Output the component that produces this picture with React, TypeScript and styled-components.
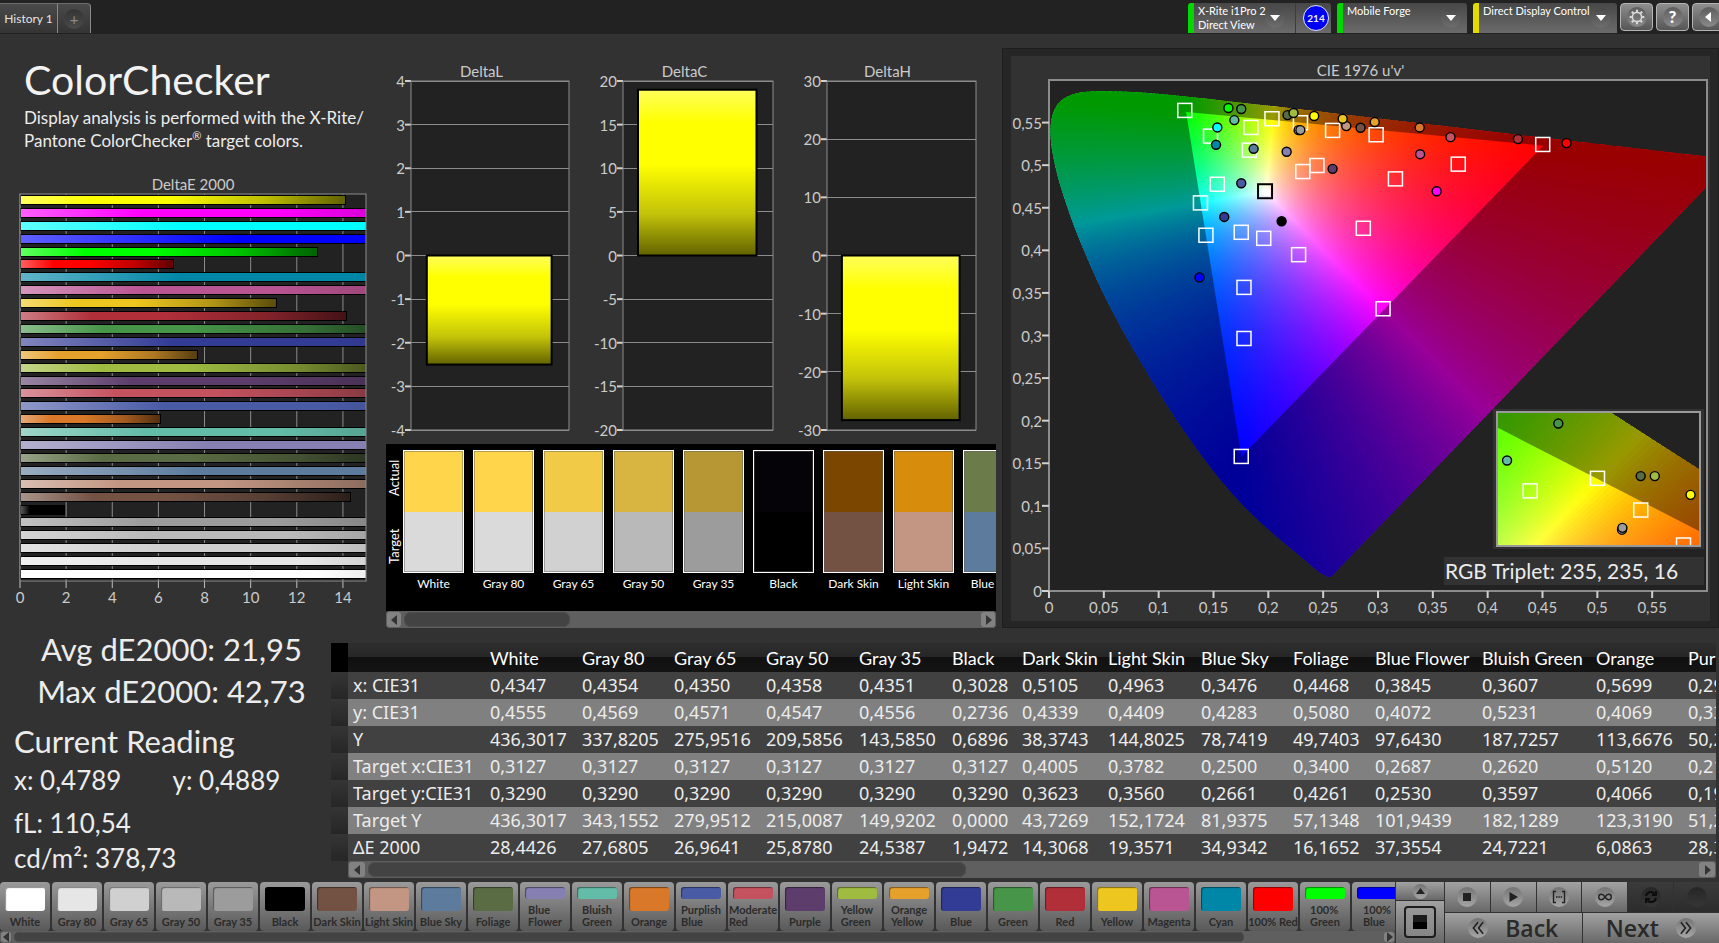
import React from 'react';
import styled, { createGlobalStyle, css } from 'styled-components';

const GlobalStyle = createGlobalStyle`
  * { box-sizing: border-box; }
  html, body { margin: 0; background: #323232; }
  body { font-family: Lato, "Open Sans", sans-serif; color: #ececec; overflow: hidden; }
  button, select { font: inherit; color: inherit; border: 0; padding: 0; margin: 0; background: none; }
  h1, h2, p, figure { margin: 0; font-weight: 400; }
`;

/* ---------- data ---------- */

type Patch = { name: string; color: string; delta: number; lines?: string[] };

const patches: Patch[] = [
  { name: 'White', color: '#ffffff', delta: 28.44 },
  { name: 'Gray 80', color: '#e6e6e6', delta: 27.68 },
  { name: 'Gray 65', color: '#d0d0d0', delta: 26.96 },
  { name: 'Gray 50', color: '#b9b9b9', delta: 25.88 },
  { name: 'Gray 35', color: '#9c9c9c', delta: 24.54 },
  { name: 'Black', color: '#000000', delta: 1.95 },
  { name: 'Dark Skin', color: '#735244', delta: 14.31 },
  { name: 'Light Skin', color: '#c29682', delta: 19.36 },
  { name: 'Blue Sky', color: '#5c7b9d', delta: 34.93 },
  { name: 'Foliage', color: '#5a6c43', delta: 16.17 },
  { name: 'Blue Flower', color: '#8580b1', delta: 37.36, lines: ['Blue', 'Flower'] },
  { name: 'Bluish Green', color: '#63bca8', delta: 24.72, lines: ['Bluish', 'Green'] },
  { name: 'Orange', color: '#d97828', delta: 6.09 },
  { name: 'Purplish Blue', color: '#4a5ba6', delta: 28.4, lines: ['Purplish', 'Blue'] },
  { name: 'Moderate Red', color: '#c4525f', delta: 19, lines: ['Moderate', 'Red'] },
  { name: 'Purple', color: '#5c3d6b', delta: 22 },
  { name: 'Yellow Green', color: '#9fbc41', delta: 16, lines: ['Yellow', 'Green'] },
  { name: 'Orange Yellow', color: '#e6a12d', delta: 7.7, lines: ['Orange', 'Yellow'] },
  { name: 'Blue', color: '#333c95', delta: 30 },
  { name: 'Green', color: '#469548', delta: 16.5 },
  { name: 'Red', color: '#b02f39', delta: 14.15 },
  { name: 'Yellow', color: '#edc71f', delta: 11.1 },
  { name: 'Magenta', color: '#ba5593', delta: 24 },
  { name: 'Cyan', color: '#0086a6', delta: 32 },
  { name: '100% Red', color: '#ff0000', delta: 6.65 },
  { name: '100% Green', color: '#00ff00', delta: 12.9, lines: ['100%', 'Green'] },
  { name: '100% Blue', color: '#0000ff', delta: 42.73, lines: ['100%', 'Blue'] },
  { name: '100% Cyan', color: '#00ffff', delta: 33 },
  { name: '100% Magenta', color: '#ff00ff', delta: 24 },
  { name: '100% Yellow', color: '#ffff00', delta: 14.1 },
];

const comparison = [
  ['White', '#ffd54c', '#dadada'],
  ['Gray 80', '#ffd54c', '#dadada'],
  ['Gray 65', '#f1cb48', '#d1d1d1'],
  ['Gray 50', '#d8b440', '#b9b9b9'],
  ['Gray 35', '#b79733', '#9c9c9c'],
  ['Black', '#050308', '#000000'],
  ['Dark Skin', '#7b4700', '#735244'],
  ['Light Skin', '#d78c0b', '#c29682'],
  ['Blue Sky', '#6b7c4a', '#5c7b9d'],
];

const columns: [string, number][] = [
  ['White', 92], ['Gray 80', 92], ['Gray 65', 92], ['Gray 50', 93], ['Gray 35', 93],
  ['Black', 70], ['Dark Skin', 86], ['Light Skin', 93], ['Blue Sky', 92], ['Foliage', 82],
  ['Blue Flower', 107], ['Bluish Green', 114], ['Orange', 92], ['Purplish Blue', 110],
];

const rows: [string, string[]][] = [
  ['x: CIE31', ['0,4347', '0,4354', '0,4350', '0,4358', '0,4351', '0,3028', '0,5105', '0,4963', '0,3476', '0,4468', '0,3845', '0,3607', '0,5699', '0,2918']],
  ['y: CIE31', ['0,4555', '0,4569', '0,4571', '0,4547', '0,4556', '0,2736', '0,4339', '0,4409', '0,4283', '0,5080', '0,4072', '0,5231', '0,4069', '0,3315']],
  ['Y', ['436,3017', '337,8205', '275,9516', '209,5856', '143,5850', '0,6896', '38,3743', '144,8025', '78,7419', '49,7403', '97,6430', '187,7257', '113,6676', '50,2741']],
  ['Target x:CIE31', ['0,3127', '0,3127', '0,3127', '0,3127', '0,3127', '0,3127', '0,4005', '0,3782', '0,2500', '0,3400', '0,2687', '0,2620', '0,5120', '0,2152']],
  ['Target y:CIE31', ['0,3290', '0,3290', '0,3290', '0,3290', '0,3290', '0,3290', '0,3623', '0,3560', '0,2661', '0,4261', '0,2530', '0,3597', '0,4066', '0,1906']],
  ['Target Y', ['436,3017', '343,1552', '279,9512', '215,0087', '149,9202', '0,0000', '43,7269', '152,1724', '81,9375', '57,1348', '101,9439', '182,1289', '123,3190', '51,2360']],
  ['ΔE 2000', ['28,4426', '27,6805', '26,9641', '25,8780', '24,5387', '1,9472', '14,3068', '19,3571', '34,9342', '16,1652', '37,3554', '24,7221', '6,0863', '28,3912']],
];

type Point = [number, number];

/* u'v' targets */
const targets: Point[] = [
  [0.1238, 0.5643], [0.1473, 0.5341], [0.1841, 0.5443], [0.2033, 0.5545], [0.2293, 0.5498],
  [0.2586, 0.5408], [0.2983, 0.5357], [0.4502, 0.5243], [0.1828, 0.5176], [0.2314, 0.4925],
  [0.2443, 0.4996], [0.3159, 0.4839], [0.3732, 0.5012], [0.1535, 0.4776], [0.1381, 0.4557],
  [0.1431, 0.4177], [0.1753, 0.4212], [0.1958, 0.4141], [0.2866, 0.4259], [0.2276, 0.3949],
  [0.1778, 0.3565], [0.3046, 0.3314], [0.1778, 0.2965], [0.1753, 0.158],
];

const readings: [number, number, string][] = [
  [0.1636, 0.5671, '#00ff00'], [0.1753, 0.5659, '#469548'], [0.169, 0.5529, '#63bca8'],
  [0.1535, 0.5443, '#00ffff'], [0.1523, 0.5239, '#0086a6'], [0.1866, 0.5192, '#5c7b9d'],
  [0.2167, 0.5157, '#8580b1'], [0.2175, 0.5588, '#5a6c43'], [0.223, 0.5612, '#9fbc41'],
  [0.2418, 0.5577, '#ffff00'], [0.2276, 0.5412, '#e6e6e6'], [0.2292, 0.5412, '#9c9c9c'],
  [0.2711, 0.5459, '#c29682'], [0.2678, 0.5545, '#edc71f'], [0.2841, 0.5439, '#735244'],
  [0.297, 0.5506, '#e6a12d'], [0.338, 0.5443, '#d97828'], [0.3661, 0.5329, '#c4525f'],
  [0.4276, 0.5306, '#b02f39'], [0.4719, 0.5259, '#ff0000'], [0.3384, 0.5129, '#ba5593'],
  [0.3535, 0.4694, '#ff00ff'], [0.2586, 0.4957, '#5c3d6b'], [0.1753, 0.4788, '#4a5ba6'],
  [0.1598, 0.4392, '#333c95'], [0.2121, 0.4341, '#000000'], [0.1372, 0.3682, '#0000ff'],
];

const insetTargets: Point[] = [[16, 59], [49.5, 49.5], [71, 73.5], [92.3, 100]];
const insetReadings: [number, number, string][] = [
  [4.5, 36, '#63bca8'], [30, 8, '#469548'], [71, 47.8, '#5a6c43'], [78, 47.8, '#9fbc41'],
  [95.8, 62, '#ffff00'], [61.7, 88.4, '#e6e6e6'], [61.9, 87, '#9c9c9c'],
];

/* ---------- chromaticity geometry ---------- */

const toUV = ([x, y]: Point): Point => {
  const d = -2 * x + 12 * y + 3;
  return [(4 * x) / d, (9 * y) / d];
};

const fromUV = ([u, v]: Point): Point => {
  const d = 6 * u - 16 * v + 12;
  return [(9 * u) / d, (4 * v) / d];
};

/* The violet end is rounded off, the rest follows the spectral locus. */
const locusTip: Point[] = [[0.2635, 0.0255], [0.2585, 0.0185], [0.2545, 0.0168], [0.251, 0.0188]];

const locusXY: Point[] = [
  ...locusTip.map(fromUV),
  [0.1689, 0.0069], [0.1644, 0.0109], [0.1566, 0.0177],
  [0.151, 0.0227], [0.144, 0.0297], [0.1355, 0.0399], [0.1241, 0.0578], [0.1096, 0.0868],
  [0.0913, 0.1327], [0.0687, 0.2007], [0.0454, 0.295], [0.0235, 0.4127], [0.0082, 0.5384],
  [0.0039, 0.6548], [0.0139, 0.7502], [0.0389, 0.812], [0.0743, 0.8338], [0.1142, 0.8262],
  [0.1547, 0.8059], [0.2296, 0.7543], [0.3016, 0.6923], [0.3731, 0.6245], [0.4441, 0.5547],
  [0.5125, 0.4866], [0.5752, 0.4242], [0.627, 0.3725], [0.6658, 0.334], [0.6915, 0.3083],
  [0.719, 0.2809], [0.7347, 0.2653],
];

const colorAt = ([x, yRaw]: Point): string => {
  const y = Math.max(yRaw, 0.0005);
  const X = x / y;
  const Z = (1 - x - y) / y;
  const linear = [
    3.2406 * X - 1.5372 - 0.4986 * Z,
    -0.9689 * X + 1.8758 + 0.0415 * Z,
    0.0557 * X - 0.204 + 1.057 * Z,
  ].map((c) => Math.max(c, 0));
  const peak = Math.max(...linear, 0.0001);
  return `rgb(${linear.map((c) => Math.round((255 * c) / peak)).join(',')})`;
};

const smoothPath = (pts: Point[]): string => {
  let d = `M${pts[0][0]} ${pts[0][1]}`;
  for (let i = 0; i < pts.length - 1; i += 1) {
    const p0 = pts[Math.max(i - 1, 0)];
    const p1 = pts[i];
    const p2 = pts[i + 1];
    const p3 = pts[Math.min(i + 2, pts.length - 1)];
    d += `C${p1[0] + (p2[0] - p0[0]) / 6} ${p1[1] + (p2[1] - p0[1]) / 6} ${p2[0] - (p3[0] - p1[0]) / 6} ${p2[1] - (p3[1] - p1[1]) / 6} ${p2[0]} ${p2[1]}`;
  }
  return `${d}Z`;
};

type GamutProps = { id: string; space: 'uv' | 'xy'; view: [number, number, number, number]; from?: number; to?: number };

const stopCount = 20;

const Gamut = ({ id, space, view, from = 0, to = 360 }: GamutProps) => {
  const [left, right, bottom, top] = view;
  const project = space === 'uv' ? toUV : (p: Point) => p;
  const unproject = space === 'uv' ? fromUV : (p: Point) => p;
  const place = ([a, b]: Point): Point => [(a - left) * 1000, (top - b) * 1000];
  const white = project([0.3127, 0.329]);
  const [cx, cy] = place(white);
  const reach = 0.5;
  const wedges: number[] = [];
  for (let a = from; a < to; a += 1) wedges.push(a);
  const locus = smoothPath(locusXY.map(project).map(place));
  const triangle = ([[0.64, 0.33], [0.3, 0.6], [0.15, 0.06]] as Point[])
    .map(project)
    .map(place)
    .map(([x, y]) => `${x} ${y}`)
    .join('L');
  const edge = (deg: number): string => {
    const r = (deg * Math.PI) / 180;
    return `${cx + Math.cos(r) * reach * 1010} ${cy - Math.sin(r) * reach * 1010}`;
  };
  return (
    <svg
      width="100%"
      height="100%"
      viewBox={`0 0 ${(right - left) * 1000} ${(top - bottom) * 1000}`}
      preserveAspectRatio="none"
    >
      <defs>
        <clipPath id={`${id}-locus`}>
          <path d={locus} />
        </clipPath>
        {wedges.map((a) => {
          const r = ((a + 0.5) * Math.PI) / 180;
          return (
            <radialGradient key={a} id={`${id}-${a}`} gradientUnits="userSpaceOnUse" cx={cx} cy={cy} r={reach * 1000}>
              {Array.from({ length: stopCount }, (_, i) => {
                const t = Math.pow(i / (stopCount - 1), 1.5);
                const p: Point = [white[0] + Math.cos(r) * t * reach, white[1] + Math.sin(r) * t * reach];
                return <stop key={i} offset={t} stopColor={colorAt(unproject(p))} />;
              })}
            </radialGradient>
          );
        })}
      </defs>
      <g clipPath={`url(#${id}-locus)`}>
        <circle cx={cx} cy={cy} r="40" fill="#fff" />
        {wedges.map((a) => (
          <path
            key={a}
            d={`M${cx} ${cy}L${edge(a - 0.1)}L${edge(a + 1.6)}Z`}
            fill={`url(#${id}-${a})`}
            shapeRendering="crispEdges"
          />
        ))}
        <circle cx={cx} cy={cy} r="4" fill="#fff" />
        <path d={`M-500 -500H1500V1500H-500ZM${triangle}Z`} fillRule="evenodd" fill="#000" fillOpacity="0.4" />
      </g>
    </svg>
  );
};

/* ---------- chart pieces ---------- */

const PlotSvg = styled.svg`
  display: block;
  width: 100%;
  height: 100%;
  overflow: visible;
  font-size: 15px;
  fill: #cbcbcb;
`;

const Chart = styled.figure<{ $pad: string }>`
  display: flex;
  flex-direction: column;
  flex: 1;
  min-width: 0;
  min-height: 0;
  padding: ${(p) => p.$pad};
`;

const ChartTitle = styled.figcaption`
  height: 20px;
  line-height: 20px;
  font-size: 15px;
  color: #cbcbcb;
  text-align: center;
`;

const PlotBox = styled.div<{ $left?: number; $right?: number }>`
  position: relative;
  flex: 1;
  min-height: 0;
  margin-left: ${(p) => p.$left ?? 0}px;
  margin-right: ${(p) => p.$right ?? 0}px;
`;

/* Lets the drawing take the height of its flex box without adding to it. */
const PlotFill = styled.div`
  position: absolute;
  inset: 0;
`;

const shade = (hex: string, amount: number): string => {
  const channels = [1, 3, 5].map((i) => parseInt(hex.slice(i, i + 2), 16));
  const out = channels.map((c) => Math.round(amount > 0 ? c + (255 - c) * amount : c * (1 + amount)));
  return `rgb(${out.join(',')})`;
};

const DeltaEChart = () => {
  const max = 15;
  const list = [...patches].reverse();
  return (
    <PlotSvg role="img" aria-label="DeltaE 2000 per patch">
      <defs>
        {list.map((p, i) => (
          <linearGradient key={p.name} id={`de-${i}`}>
            <stop offset="0" stopColor={shade(p.color, 0.38)} />
            <stop offset="0.22" stopColor={p.color} />
            <stop offset="0.45" stopColor={p.color} />
            <stop offset="0.75" stopColor={shade(p.color, -0.25)} />
            <stop offset="1" stopColor={shade(p.color, -0.62)} />
          </linearGradient>
        ))}
      </defs>
      <rect width="100%" height="100%" fill="#222" />
      {[0, 2, 4, 6, 8, 10, 12, 14].map((t) => {
        const x = `${(t / max) * 100}%`;
        return (
          <g key={t}>
            <line x1={x} x2={x} y1="0" y2="100%" stroke="#8c8c8c" />
            <svg x={x} y="100%" overflow="visible">
              <line y2="7" stroke="#c0c0c0" />
              <text y="22" textAnchor="middle">{t}</text>
            </svg>
          </g>
        );
      })}
      <svg width="100%" height="100%" shapeRendering="crispEdges">
        {list.map((p, i) => (
          <rect
            key={p.name}
            y={`${((i + 0.5) / list.length) * 100}%`}
            width={`${(p.delta / max) * 100}%`}
            height="9"
            transform="translate(0 -5)"
            fill={`url(#de-${i})`}
            stroke="#000"
          />
        ))}
      </svg>
      <rect width="100%" height="100%" fill="none" stroke="#8c8c8c" />
    </PlotSvg>
  );
};

const DeltaChart = ({ id, min, max, step, value }: { id: string; min: number; max: number; step: number; value: number }) => {
  const pct = (v: number) => ((max - v) / (max - min)) * 100;
  const ticks: number[] = [];
  for (let t = max; t >= min; t -= step) ticks.push(t);
  const top = pct(Math.max(value, 0));
  const bottom = pct(Math.min(value, 0));
  return (
    <PlotSvg role="img" aria-label={`${id} ${value}`}>
      <defs>
        <linearGradient id={`${id}-fill`} x2="0" y2="1">
          <stop offset="0" stopColor="#ffff5c" />
          <stop offset="0.2" stopColor="#ffff00" />
          <stop offset="0.45" stopColor="#ffff00" />
          <stop offset="0.75" stopColor="#c2c20a" />
          <stop offset="1" stopColor="#626200" />
        </linearGradient>
      </defs>
      <rect width="100%" height="100%" fill="#222" />
      {ticks.map((t) => (
        <svg key={t} y={`${pct(t)}%`} overflow="visible">
          <line x1="0" x2="100%" stroke="#8c8c8c" shapeRendering="crispEdges" />
          <line x1="-6" x2="0" stroke="#d0d0d0" strokeWidth="2" />
          <text x="-6" y="6" textAnchor="end">{t}</text>
        </svg>
      ))}
      <rect width="100%" height="100%" fill="none" stroke="#8c8c8c" />
      <rect x="10%" width="79%" y={`${top}%`} height={`${bottom - top}%`} fill={`url(#${id}-fill)`} stroke="#000" strokeWidth="2" />
    </PlotSvg>
  );
};

const Marker = ({ x, y, bold }: { x: number; y: number; bold?: boolean }) => (
  <svg x={`${x}%`} y={`${y}%`} overflow="visible">
    <rect x="-7" y="-7" width="14" height="14" fill="none" stroke={bold ? '#000' : '#fff'} strokeWidth={bold ? 2 : 1.5} />
  </svg>
);

const Reading = ({ x, y, color }: { x: number; y: number; color: string }) => (
  <circle cx={`${x}%`} cy={`${y}%`} r="4.5" fill={color} stroke="#000" strokeWidth="1.4" />
);

const comma = (v: number): string => String(Number(v.toFixed(2))).replace('.', ',');
const cieTicks = Array.from({ length: 12 }, (_, i) => i * 0.05);

const CieChart = () => {
  const px = (u: number) => (u / 0.6) * 100;
  const py = (v: number) => 100 - (v / 0.6) * 100;
  return (
    <PlotSvg role="img" aria-label="CIE 1976 chromaticity diagram">
      <rect width="100%" height="100%" fill="#222" />
      <Gamut id="cie" space="uv" view={[0, 0.6, 0, 0.6]} />
      <rect width="100%" height="100%" fill="none" stroke="#8c8c8c" strokeWidth="2" />
      {cieTicks.map((t) => (
        <g key={t}>
          <svg x={`${px(t)}%`} y="100%" overflow="visible">
            <line y2="7" stroke="#d0d0d0" strokeWidth="2" />
            <text y="22" textAnchor="middle">{comma(t)}</text>
          </svg>
          <svg y={`${py(t)}%`} overflow="visible">
            <line x1="-7" x2="0" stroke="#d0d0d0" strokeWidth="2" />
            <text x="-7" y="6" textAnchor="end">{comma(t)}</text>
          </svg>
        </g>
      ))}
      {targets.map(([u, v]) => (
        <Marker key={`${u}-${v}`} x={px(u)} y={py(v)} />
      ))}
      <Marker x={px(0.197)} y={py(0.4694)} bold />
      {readings.map(([u, v, color]) => (
        <Reading key={`${u}-${v}`} x={px(u)} y={py(v)} color={color} />
      ))}
    </PlotSvg>
  );
};

const InsetSvg = styled.svg`
  display: block;
  width: 205px;
  height: 136px;
  background: #222;
  border: 2px solid #9a9a9a;
`;

const Inset = () => (
  <InsetSvg role="img" aria-label="Detail around the current reading">
    <Gamut id="inset" space="xy" view={[0.3556, 0.4843, 0.4397, 0.5705]} from={25} to={90} />
    {insetTargets.map(([x, y]) => (
      <Marker key={x} x={x} y={y} />
    ))}
    {insetReadings.map(([x, y, color]) => (
      <Reading key={`${x}-${y}`} x={x} y={y} color={color} />
    ))}
  </InsetSvg>
);

const InsetStack = styled.div`
  position: absolute;
  right: 3px;
  bottom: 6px;
  display: flex;
  flex-direction: column;
  align-items: flex-end;
  gap: 8px;
`;

const InsetFrame = styled.div`
  padding: 2px 3px;
  background: #323232;
`;

const Triplet = styled.p`
  width: 260px;
  height: 28px;
  padding-left: 1px;
  background: #323232;
  font-size: 21px;
  line-height: 28px;
  white-space: nowrap;
`;

/* ---------- scroll bar ---------- */

const Track = styled.div<{ $h: number }>`
  display: flex;
  align-items: center;
  gap: 3px;
  height: ${(p) => p.$h}px;
  padding: 1px;
  background: #5f5f5f;
  border-radius: 2px;
`;

const Arrow = styled.button<{ $w: number }>`
  display: flex;
  align-items: center;
  justify-content: center;
  flex: none;
  width: ${(p) => p.$w}px;
  height: 100%;
  border-radius: 3px;
  background: #828282;
`;

const Rail = styled.div`
  flex: 1;
  height: 100%;
`;

const Thumb = styled.div<{ $w: number }>`
  width: ${(p) => p.$w}%;
  height: 100%;
  border-radius: 7px;
  background: #434343;
  box-shadow: inset 0 0 0 1px #4d4d4d;
`;

const ScrollBar = ({ h, arrow, size }: { h: number; arrow: number; size: number }) => (
  <Track $h={h}>
    <Arrow type="button" $w={arrow} aria-label="Scroll left">
      <svg width="7" height="10" viewBox="0 0 7 10"><path d="M6 0V10L0 5Z" fill="#333" /></svg>
    </Arrow>
    <Rail><Thumb $w={size} /></Rail>
    <Arrow type="button" $w={arrow} aria-label="Scroll right">
      <svg width="7" height="10" viewBox="0 0 7 10"><path d="M1 0V10L7 5Z" fill="#333" /></svg>
    </Arrow>
  </Track>
);

/* ---------- top bar ---------- */

const Page = styled.div`
  display: grid;
  grid-template-rows: 34px minmax(0, 1fr) auto auto;
  height: 100vh;
  background: #323232;
`;

const TopBar = styled.header`
  display: flex;
  align-items: flex-start;
  padding-top: 3px;
  background: #222;
  overflow: hidden;
`;

const Tab = styled.button<{ $w: number }>`
  display: flex;
  align-items: center;
  justify-content: center;
  width: ${(p) => p.$w}px;
  height: 30px;
  border-top: 1px solid #6c6c6c;
  border-right: 1px solid #8a8a8a;
  background: linear-gradient(#4a4a4a, #343434);
  font-size: 12px;
  color: #e4e4e4;
  white-space: nowrap;

  &:last-of-type { border-top-right-radius: 4px; }
`;

const PlusDisc = styled.span`
  width: 20px;
  height: 20px;
  border-radius: 50%;
  background: linear-gradient(#343434, #4a4a4a);
  color: #8a8a8a;
  font-size: 15px;
  line-height: 20px;
`;

const Tabs = styled.nav`
  display: flex;
  flex: 1;
`;

const DeviceGroup = styled.div`
  display: flex;
  flex: none;
  gap: 6px;
`;

const Device = styled.div<{ $w: number; $accent: string }>`
  position: relative;
  display: flex;
  width: ${(p) => p.$w}px;
  height: 30px;
  padding-left: 4px;
  border-left: 6px solid ${(p) => p.$accent};
  border-radius: 3px 3px 0 0;
  background: linear-gradient(#474747, #6b6b6b);
`;

const DeviceText = styled.div`
  flex: 1;
  min-width: 0;
  padding-top: 1px;
  font-size: 11px;
  line-height: 14px;
  color: #fff;
  white-space: nowrap;
`;

const DeviceSelect = styled.select`
  display: block;
  width: 100%;
  height: 14px;
  appearance: none;
  font-size: 11px;
  line-height: 14px;
  color: #fff;
  outline: 0;
`;

const Chevron = styled.span`
  position: absolute;
  top: 5px;
  right: 6px;
  display: flex;
  align-items: center;
  justify-content: center;
  width: 20px;
  height: 20px;
  border-radius: 50%;
  background: linear-gradient(#4a4a4a, #6e6e6e);
  pointer-events: none;
`;

const Divider = styled.span`
  width: 1px;
  background: #3c3c3c;
`;

const BadgeCell = styled.span`
  display: flex;
  align-items: center;
  justify-content: center;
  width: 35px;
  padding-left: 5px;
`;

const Badge = styled.span`
  flex: none;
  width: 26px;
  height: 26px;
  border: 1px solid #dfe3ff;
  border-radius: 50%;
  background: #0000f5;
  font-size: 10px;
  font-weight: 700;
  line-height: 24px;
  text-align: center;
`;

const DeviceMain = styled.div`
  position: relative;
  display: flex;
  flex: 1;
  min-width: 0;
  margin-right: 4px;
`;

const ToolGroup = styled.div`
  display: flex;
  flex: none;
  gap: 3px;
  margin: 0 -6px 0 3px;
`;

const Tool = styled.button`
  display: flex;
  align-items: center;
  justify-content: center;
  width: 33px;
  height: 28px;
  border: 1px solid #b4b4b4;
  border-radius: 4px;
  background: linear-gradient(#8e8e8e, #565656);
`;

const ToolDisc = styled.span`
  display: flex;
  align-items: center;
  justify-content: center;
  width: 20px;
  height: 20px;
  border-radius: 50%;
  background: linear-gradient(#5c5c5c, #8a8a8a);
  font-size: 17px;
  font-weight: 900;
  line-height: 20px;
  color: #fff;
`;

const DownIcon = () => (
  <svg width="10" height="6" viewBox="0 0 10 6"><path d="M0 0H10L5 6Z" fill="#fff" /></svg>
);

const GearIcon = () => (
  <svg width="16" height="16" viewBox="-9 -9 18 18" fill="none" stroke="#dcdcdc">
    <circle r="5.2" strokeWidth="1.7" />
    {[0, 45, 90, 135, 180, 225, 270, 315].map((a) => (
      <path key={a} d="M0 -5.8V-8.2" strokeWidth="2.4" transform={`rotate(${a})`} />
    ))}
  </svg>
);

/* ---------- upper area ---------- */

const Upper = styled.main`
  display: grid;
  grid-template-columns: 380px 616px minmax(0, 1fr);
  min-height: 0;
`;

const Column = styled.section`
  display: flex;
  flex-direction: column;
  min-width: 0;
  min-height: 0;
`;

const Intro = styled.div`
  height: 140px;
  padding: 20px 0 0 24px;
`;

const Title = styled.h1`
  font-size: 41px;
  line-height: 52px;
  color: #f2f2f2;
`;

const Lead = styled.p`
  font-size: 17px;
  line-height: 23px;
  white-space: nowrap;
`;

const Registered = styled.sup`
  font-size: 11px;
  line-height: 0;
`;

const DeltaRow = styled.div`
  display: grid;
  grid-template-columns: repeat(3, minmax(0, 1fr));
  flex: 1;
  min-height: 0;
  padding: 27px 7px 14px 0;
`;

const Strip = styled.div`
  margin-left: 6px;
  background: #000;
`;

const StripBody = styled.div`
  display: flex;
  height: 167px;
  overflow: hidden;
`;

const StripSide = styled.div`
  display: flex;
  flex-direction: column;
  flex: none;
  width: 17px;
  height: 136px;
`;

const SideLabel = styled.span`
  flex: 1;
  writing-mode: vertical-rl;
  transform: rotate(180deg);
  font-size: 13px;
  line-height: 17px;
  text-align: center;
  color: #fff;
`;

const StripItems = styled.div`
  display: flex;
  gap: 9px;
  padding-top: 6px;
`;

const StripItem = styled.div`
  flex: none;
  width: 61px;
  font-size: 12px;
  line-height: 21px;
  text-align: center;
  white-space: nowrap;
  color: #fff;
`;

const Pair = styled.div<{ $top: string; $bottom: string }>`
  height: 123px;
  border: 1px solid #fff;
  box-shadow: inset 0 0 0 1px rgba(90, 90, 90, 0.45);
  background: linear-gradient(${(p) => p.$top} 50%, ${(p) => p.$bottom} 50%);
`;

const CiePanel = styled.section`
  display: flex;
  flex-direction: column;
  margin: 14px 0 0 6px;
  padding: 7px 8px 6px;
  background: #262626;
  border: 1px solid #1d1d1d;
  min-height: 0;
`;

const CieInner = styled.div`
  display: flex;
  flex: 1;
  min-height: 0;
  background: #323232;
`;

/* ---------- lower area ---------- */

const Lower = styled.section`
  display: grid;
  grid-template-columns: 331px minmax(0, 1fr);
  padding: 15px 3px 4px 0;
`;

const Stats = styled.div`
  display: flex;
  flex-direction: column;
`;

const BigStat = styled.p`
  padding-left: 12px;
  font-size: 31px;
  line-height: 42px;
  text-align: center;
  white-space: nowrap;

  &:first-child { margin-top: -15px; }
`;

const ReadingTitle = styled.h2`
  margin-top: 8px;
  padding-left: 14px;
  font-size: 31px;
  line-height: 42px;
`;

const ReadingRow = styled.p<{ $gap?: number }>`
  display: flex;
  margin-top: ${(p) => p.$gap ?? 0}px;
  padding-left: 14px;
  font-size: 26px;
  line-height: 35px;
`;

const ReadingCell = styled.span`
  width: 162px;
`;

const TableArea = styled.div`
  min-width: 0;
`;

const TableClip = styled.div`
  overflow: hidden;
`;

const Table = styled.table`
  table-layout: fixed;
  width: 1462px;
  border-collapse: collapse;
  font-family: "Noto Sans", "Open Sans", sans-serif;
  font-size: 18px;
  text-align: left;
`;

const cell = css`
  padding: 0 0 2px 5px;
  font-weight: 400;
  white-space: nowrap;
`;

const HeadCell = styled.th`
  ${cell}
  height: 29px;
  padding-bottom: 0;
  font-family: Lato, sans-serif;
  font-size: 18px;
  line-height: 20px;
  color: #fff;
`;

const HeadRow = styled.tr`
  background: linear-gradient(#2e2e2e 0, #262626 50%, #101010 50%, #141414 100%);
`;

const Corner = styled.td`
  padding: 0;
  background: #000;
`;

const HeadBlank = styled.td`
  padding: 0;
`;

const Gutter = styled.td`
  padding: 0;
  background: linear-gradient(#353535, #262626);
`;

const BodyRow = styled.tr<{ $alt: boolean }>`
  height: 27px;
  background: ${(p) => (p.$alt ? '#808080' : '#414141')};
`;

const BodyHead = styled.th`
  ${cell}
  line-height: 24px;
`;

const BodyCell = styled.td`
  ${cell}
  line-height: 24px;
`;

const TableScroll = styled.div`
  margin-left: 17px;
`;

/* ---------- bottom bar ---------- */

const BottomBar = styled.footer`
  display: grid;
  grid-template-columns: minmax(0, 1fr) 48px 274px;
  column-gap: 1px;
  height: 61px;
`;

const PatchArea = styled.div`
  min-width: 0;
`;

const PatchList = styled.div`
  display: flex;
  gap: 2px;
  height: 49px;
  overflow: hidden;
`;

const PatchButton = styled.button`
  display: flex;
  flex-direction: column;
  align-items: center;
  flex: none;
  width: 50px;
  height: 49px;
  padding-top: 5px;
  border-radius: 4px;
  background: linear-gradient(#9a9a9a, #595959);
`;

const PatchColor = styled.span<{ $color: string; $short: boolean }>`
  flex: none;
  width: 40px;
  height: ${(p) => (p.$short ? 12 : 24)}px;
  margin-bottom: 5px;
  border-radius: 3px;
  background: ${(p) => p.$color};
  box-shadow: inset 1px 1px 1px rgba(0, 0, 0, 0.45);
`;

const PatchName = styled.span`
  font-size: 11px;
  font-weight: 700;
  line-height: 12px;
  text-align: left;
  white-space: nowrap;
  color: #2b2b2b;
`;

const SideTools = styled.div`
  display: grid;
  grid-template-rows: 18px 42px;
  gap: 1px;
`;

const Metal = styled.button<{ $off?: boolean }>`
  display: flex;
  align-items: center;
  justify-content: center;
  gap: 17px;
  background: ${(p) => (p.$off ? 'linear-gradient(#3b3b3b, #2c2c2c)' : 'linear-gradient(#a2a2a2, #686868)')};
`;

const Frame = styled.span`
  display: flex;
  align-items: center;
  justify-content: center;
  width: 32px;
  height: 32px;
  border: 2px solid #1d1d1d;
  border-radius: 4px;
  background: linear-gradient(#989898, #868686);
`;

const StopSquare = styled.span`
  width: 14px;
  height: 14px;
  background: linear-gradient(#1c1c1c 50%, #000 50%);
`;

const Transport = styled.div`
  display: grid;
  grid-template-rows: 30px 30px;
  gap: 1px;
`;

const SixUp = styled.div`
  display: grid;
  grid-template-columns: repeat(6, minmax(0, 1fr));
  gap: 1px;
`;

const TwoUp = styled.div`
  display: grid;
  grid-template-columns: 1fr 1fr;
  gap: 1px;
`;

const Disc = styled.span<{ $off?: boolean; $small?: boolean }>`
  display: flex;
  align-items: center;
  justify-content: center;
  flex: none;
  width: ${(p) => (p.$small ? 15 : 20)}px;
  height: ${(p) => (p.$small ? 15 : 20)}px;
  border-radius: 50%;
  background: ${(p) => (p.$off ? 'linear-gradient(#262626, #363636)' : 'linear-gradient(#747474, #a6a6a6)')};
`;

const NavText = styled.span`
  font-family: "Open Sans", "Noto Sans", sans-serif;
  font-size: 23px;
  font-weight: 600;
  line-height: 30px;
  color: #2a2a2a;
`;

const Glyph = ({ children, size = 14 }: { children: React.ReactNode; size?: number }) => (
  <svg width={size} height={size} viewBox="0 0 14 14" fill="none" stroke="#222" strokeWidth="1.4">
    {children}
  </svg>
);

const transport: { label: string; off?: boolean; icon: React.ReactNode }[] = [
  { label: 'Stop', icon: <path d="M3 3H11V11H3Z" fill="#222" stroke="none" /> },
  { label: 'Play', icon: <path d="M3.5 2L12 7L3.5 12Z" fill="#222" stroke="none" /> },
  { label: 'Read range', icon: <path d="M4 1.5H1.5V12.5H4M10 1.5H12.5V12.5H10M4 7H5.5M6.3 7H7.8M8.6 7H10" /> },
  { label: 'Continuous', icon: <path d="M7 7C5.5 4.7 4.5 4.3 3.4 4.3A2.7 2.7 0 0 0 3.4 9.7C4.5 9.7 5.5 9.3 7 7C8.5 4.7 9.5 4.3 10.6 4.3A2.7 2.7 0 0 1 10.6 9.7C9.5 9.7 8.5 9.3 7 7Z" /> },
  { label: 'Refresh', off: true, icon: <path d="M2 6A5 5 0 0 1 10.5 3.5M12 1V5H8M12 8A5 5 0 0 1 3.5 10.5M2 13V9H6" stroke="#0c0c0c" strokeWidth="2" /> },
  { label: 'Record', off: true, icon: null },
];

/* ---------- app ---------- */

const App = () => (
  <Page>
    <GlobalStyle />
    <TopBar>
      <Tabs>
        <Tab type="button" $w={58}>History 1</Tab>
        <Tab type="button" $w={33} aria-label="Add history"><PlusDisc>+</PlusDisc></Tab>
      </Tabs>
      <DeviceGroup>
        <Device $w={143} $accent="#00d800">
          <DeviceMain>
            <DeviceText>
              <DeviceSelect aria-label="Meter"><option>X-Rite i1Pro 2</option></DeviceSelect>
              Direct View
            </DeviceText>
            <Chevron><DownIcon /></Chevron>
          </DeviceMain>
          <Divider />
          <BadgeCell><Badge>214</Badge></BadgeCell>
        </Device>
        <Device $w={130} $accent="#00d800">
          <DeviceText>
            <DeviceSelect aria-label="Pattern source"><option>Mobile Forge</option></DeviceSelect>
          </DeviceText>
          <Chevron><DownIcon /></Chevron>
        </Device>
        <Device $w={144} $accent="#e2da00">
          <DeviceText>
            <DeviceSelect aria-label="Display control"><option>Direct Display Control</option></DeviceSelect>
          </DeviceText>
          <Chevron><DownIcon /></Chevron>
        </Device>
      </DeviceGroup>
      <ToolGroup>
        <Tool type="button" aria-label="Settings"><ToolDisc><GearIcon /></ToolDisc></Tool>
        <Tool type="button" aria-label="Help"><ToolDisc>?</ToolDisc></Tool>
        <Tool type="button" aria-label="Collapse">
          <ToolDisc><svg width="7" height="10" viewBox="0 0 7 10"><path d="M6 0V10L0 5Z" fill="#fff" /></svg></ToolDisc>
        </Tool>
      </ToolGroup>
    </TopBar>

    <Upper>
      <Column>
        <Intro>
          <Title>ColorChecker</Title>
          <Lead>Display analysis is performed with the X-Rite/</Lead>
          <Lead>Pantone ColorChecker<Registered>®</Registered> target colors.</Lead>
        </Intro>
        <Chart $pad="0 14px 47px 20px">
          <ChartTitle>DeltaE 2000</ChartTitle>
          <PlotBox><PlotFill><DeltaEChart /></PlotFill></PlotBox>
        </Chart>
      </Column>

      <Column>
        <DeltaRow>
          <Chart $pad="0">
            <ChartTitle>DeltaL</ChartTitle>
            <PlotBox $left={31} $right={14}><PlotFill><DeltaChart id="DeltaL" min={-4} max={4} step={1} value={-2.5} /></PlotFill></PlotBox>
          </Chart>
          <Chart $pad="0">
            <ChartTitle>DeltaC</ChartTitle>
            <PlotBox $left={40} $right={13}><PlotFill><DeltaChart id="DeltaC" min={-20} max={20} step={5} value={19} /></PlotFill></PlotBox>
          </Chart>
          <Chart $pad="0">
            <ChartTitle>DeltaH</ChartTitle>
            <PlotBox $left={41} $right={13}><PlotFill><DeltaChart id="DeltaH" min={-30} max={30} step={10} value={-28.3} /></PlotFill></PlotBox>
          </Chart>
        </DeltaRow>
        <Strip>
          <StripBody>
            <StripSide>
              <SideLabel>Actual</SideLabel>
              <SideLabel>Target</SideLabel>
            </StripSide>
            <StripItems>
              {comparison.map(([name, actual, target]) => (
                <StripItem key={name}>
                  <Pair $top={actual} $bottom={target} />
                  {name}
                </StripItem>
              ))}
            </StripItems>
          </StripBody>
          <ScrollBar h={17} arrow={14} size={29} />
        </Strip>
      </Column>

      <CiePanel>
        <CieInner>
          <Chart $pad="4px 0 30px">
            <ChartTitle>CIE 1976 u'v'</ChartTitle>
            <PlotBox $left={38} $right={3}>
              <PlotFill><CieChart /></PlotFill>
              <InsetStack>
                <InsetFrame><Inset /></InsetFrame>
                <Triplet>RGB Triplet: 235, 235, 16</Triplet>
              </InsetStack>
            </PlotBox>
          </Chart>
        </CieInner>
      </CiePanel>
    </Upper>

    <Lower>
      <Stats>
        <BigStat>Avg dE2000: 21,95</BigStat>
        <BigStat>Max dE2000: 42,73</BigStat>
        <ReadingTitle>Current Reading</ReadingTitle>
        <ReadingRow $gap={1}>
          <ReadingCell>x: 0,4789</ReadingCell>
          <ReadingCell>y: 0,4889</ReadingCell>
        </ReadingRow>
        <ReadingRow $gap={8}>fL: 110,54</ReadingRow>
        <ReadingRow>cd/m²: 378,73</ReadingRow>
      </Stats>
      <TableArea>
        <TableClip>
          <Table>
            <colgroup>
              <col style={{ width: 17 }} />
              <col style={{ width: 137 }} />
              {columns.map(([name, w]) => <col key={name} style={{ width: w }} />)}
            </colgroup>
            <thead>
              <HeadRow>
                <Corner />
                <HeadBlank />
                {columns.map(([name]) => <HeadCell key={name} scope="col">{name}</HeadCell>)}
              </HeadRow>
            </thead>
            <tbody>
              {rows.map(([label, values], r) => (
                <BodyRow key={label} $alt={r % 2 === 1}>
                  <Gutter />
                  <BodyHead scope="row">{label}</BodyHead>
                  {values.map((v, i) => <BodyCell key={columns[i][0]}>{v}</BodyCell>)}
                </BodyRow>
              ))}
            </tbody>
          </Table>
        </TableClip>
        <TableScroll><ScrollBar h={17} arrow={16} size={45} /></TableScroll>
      </TableArea>
    </Lower>

    <BottomBar>
      <PatchArea>
        <PatchList>
          {patches.slice(0, 27).map((p) => (
            <PatchButton key={p.name} type="button">
              <PatchColor $color={p.color} $short={Boolean(p.lines)} />
              <PatchName>
                {p.lines ? <>{p.lines[0]}<br />{p.lines[1]}</> : p.name}
              </PatchName>
            </PatchButton>
          ))}
        </PatchList>
        <ScrollBar h={12} arrow={10} size={90} />
      </PatchArea>
      <SideTools>
        <Metal type="button" aria-label="Expand">
          <Disc $small><svg width="9" height="6" viewBox="0 0 9 6"><path d="M0 6H9L4.5 0Z" fill="#222" /></svg></Disc>
        </Metal>
        <Metal type="button" aria-label="Pattern window"><Frame><StopSquare /></Frame></Metal>
      </SideTools>
      <Transport>
        <SixUp>
          {transport.map((t) => (
            <Metal key={t.label} type="button" aria-label={t.label} $off={t.off}>
              <Disc $off={t.off}>{t.icon && <Glyph>{t.icon}</Glyph>}</Disc>
            </Metal>
          ))}
        </SixUp>
        <TwoUp>
          <Metal type="button">
            <Disc><Glyph size={16}><path d="M7 2L3 7L7 12M11.5 2L7.5 7L11.5 12" /></Glyph></Disc>
            <NavText>Back</NavText>
          </Metal>
          <Metal type="button">
            <NavText>Next</NavText>
            <Disc><Glyph size={16}><path d="M2.5 2L6.5 7L2.5 12M7 2L11 7L7 12" /></Glyph></Disc>
          </Metal>
        </TwoUp>
      </Transport>
    </BottomBar>
  </Page>
);

export default App;
